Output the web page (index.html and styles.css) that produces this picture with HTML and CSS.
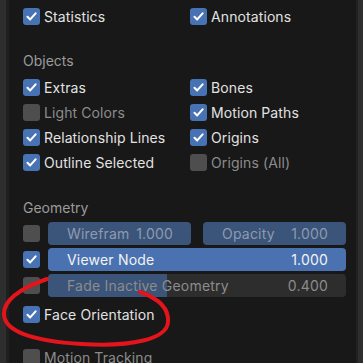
FILE: index.html
```html
<!DOCTYPE html>
<html lang="en">
<head>
  <meta charset="UTF-8">
  <title>Viewport Overlays</title>
  <link rel="stylesheet" href="styles.css">
</head>
<body>
  <div class="frame">
    <div class="edge edge-left"></div>

    <div class="panel">
      <div class="grid2 top-row">
        <label class="check on">Statistics</label>
        <label class="check on">Annotations</label>
      </div>

      <div class="heading">Objects</div>
      <div class="grid2">
        <label class="check on">Extras</label>
        <label class="check on">Bones</label>
        <label class="check off muted">Light Colors</label>
        <label class="check on">Motion Paths</label>
        <label class="check on">Relationship Lines</label>
        <label class="check on">Origins</label>
        <label class="check on">Outline Selected</label>
        <label class="check off muted">Origins (All)</label>
      </div>

      <div class="heading geo">Geometry</div>
      <div class="slider-row">
        <span class="box off"></span>
        <div class="slider dim"><span>Wirefram</span><span>1.000</span></div>
        <div class="slider dim"><span>Opacity</span><span>1.000</span></div>
      </div>
      <div class="slider-row">
        <span class="box on"></span>
        <div class="slider active"><span>Viewer Node</span><span>1.000</span></div>
      </div>
      <div class="slider-row">
        <span class="box off"></span>
        <div class="slider fade">
          <div class="fill" style="width: 40%"></div>
          <span>Fade Inactive Geometry</span><span>0.400</span>
        </div>
      </div>

      <label class="check on single">Face Orientation</label>
      <label class="check off muted single last">Motion Tracking</label>
    </div>

    <div class="edge edge-right"></div>

    <!-- red hand-drawn mark around Face Orientation -->
    <svg class="mark" width="363" height="363" viewBox="0 0 363 363">
      <path d="M47,279 C24,287 4,298 4,314 C4,331 32,341 82,344 C132,347 167,339 168,322 C169,309 160,299 140,292"
            fill="none" stroke="#e3141b" stroke-width="4" stroke-linecap="round"/>
    </svg>
  </div>
</body>
</html>
```

FILE: styles.css
```css
/* Base */
* { box-sizing: border-box; margin: 0; padding: 0; }
body { width: 363px; height: 363px; overflow: hidden; background: #181818; font-family: Inter, "Noto Sans", sans-serif; font-size: 14px; color: #e2e2e2; }

.frame { position: relative; display: flex; height: 363px; }

/* Side strips of the editor behind the popover */
.edge { flex: none; background: #2e2e2e; }
.edge-left { width: 9px; border-right: 3px solid #202020; }
.edge-right { width: 7px; border-left: 2px solid #222; }

.panel { flex: 1; padding: 4px 0 0 14px; }

/* Two column checkbox grid */
.grid2 { display: grid; grid-template-columns: 167px 1fr; }
.grid2 .check { height: 25px; }
.top-row .check { height: 24px; }

.heading { height: 24px; margin-top: 20px; margin-bottom: 3px; display: flex; align-items: center; color: #9b9b9b; }

/* Checkbox with label */
.check { display: flex; align-items: center; gap: 4px; height: 24px; white-space: nowrap; letter-spacing: 0.1px; }
.check::before, .box {
  content: ""; flex: none; width: 17px; height: 17px; border-radius: 3px;
  background: #4772b3 no-repeat center / 13px 13px;
}
.check.on::before, .box.on {
  background-color: #4772b3;
  background-image: url("data:image/svg+xml,%3Csvg xmlns='http://www.w3.org/2000/svg' viewBox='0 0 13 13'%3E%3Cpath d='M2.5 6.8 L5.2 9.4 L10.6 3.4' fill='none' stroke='white' stroke-width='2.1' stroke-linecap='round' stroke-linejoin='round'/%3E%3C/svg%3E");
}
.check.off::before, .box.off { background: #4e4e4e; }
.check.muted { color: #8c8c8c; }
.check.single { margin-top: 5px; }
.check.last { margin-top: 19px; }

/* Slider rows */
.slider-row { display: flex; align-items: center; gap: 8px; height: 23px; margin-bottom: 3px; }
.slider-row .slider + .slider { margin-left: 4px; }
.slider {
  position: relative; flex: 1; max-width: 298px; height: 23px; border-radius: 4px; overflow: hidden;
  display: flex; justify-content: space-between; align-items: center; padding: 0 18px 0 19px;
  white-space: nowrap; letter-spacing: 0.2px;
}
.slider span { position: relative; }
.slider.dim { flex: none; width: 143px; background: #3b5479; color: #8e9ab0; }
.slider.active { background: #4a72b1; color: #f2f2f2; }
.slider.fade { background: #2d2d2d; color: #8c8c8c; }
.slider .fill { position: absolute; left: 0; top: 0; bottom: 0; background: #3b5479; }

/* Annotation overlay */
.mark { position: absolute; left: 0; top: 0; pointer-events: none; }
```
